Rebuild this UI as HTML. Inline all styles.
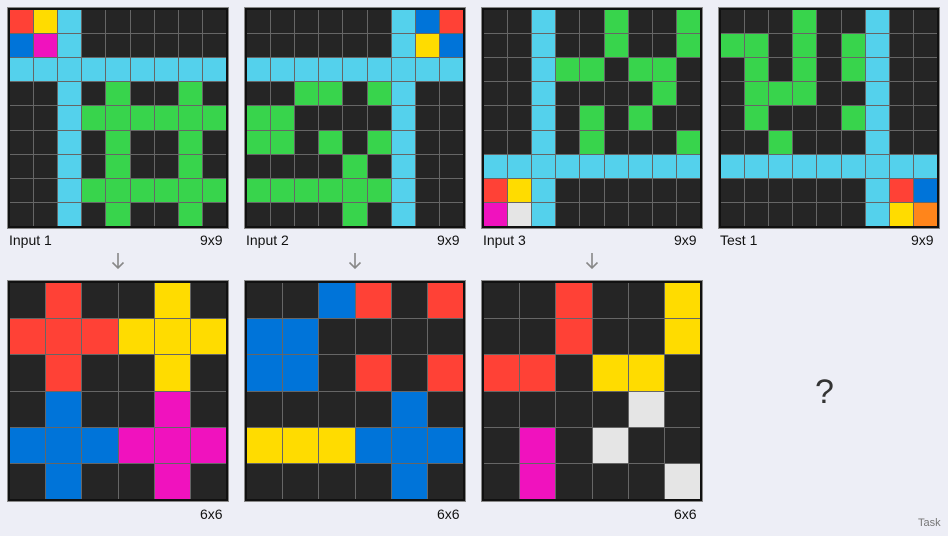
<!DOCTYPE html>
<html><head><meta charset="utf-8"><style>
body{margin:0;width:948px;height:536px;background:#edeef6;font-family:"Liberation Sans",sans-serif;position:relative;overflow:hidden}
.g{position:absolute;width:216px;height:216px;padding:2px;border:1px solid #888;display:grid;gap:1px;box-sizing:content-box;background:#666;outline:2px solid #111;outline-offset:-3px}
.n9{grid-template-columns:repeat(9,1fr);grid-template-rows:repeat(9,1fr)}
.n6{grid-template-columns:repeat(6,1fr);grid-template-rows:repeat(6,1fr)}
i{display:block}
.k{background:#252525}.c{background:#54d1ec}.e{background:#38d44c}.r{background:#ff4136}.y{background:#ffdc00}.b{background:#0074d9}.m{background:#f012be}.w{background:#e5e5e5}.o{background:#ff851b}
.l{position:absolute;font-size:14px;color:#111}
.a{position:absolute;width:14px;height:20px}
</style></head><body>

<div class="g n9" style="left:7px;top:7px">
<i class=r></i><i class=y></i><i class=c></i><i class=k></i><i class=k></i><i class=k></i><i class=k></i><i class=k></i><i class=k></i>
<i class=b></i><i class=m></i><i class=c></i><i class=k></i><i class=k></i><i class=k></i><i class=k></i><i class=k></i><i class=k></i>
<i class=c></i><i class=c></i><i class=c></i><i class=c></i><i class=c></i><i class=c></i><i class=c></i><i class=c></i><i class=c></i>
<i class=k></i><i class=k></i><i class=c></i><i class=k></i><i class=e></i><i class=k></i><i class=k></i><i class=e></i><i class=k></i>
<i class=k></i><i class=k></i><i class=c></i><i class=e></i><i class=e></i><i class=e></i><i class=e></i><i class=e></i><i class=e></i>
<i class=k></i><i class=k></i><i class=c></i><i class=k></i><i class=e></i><i class=k></i><i class=k></i><i class=e></i><i class=k></i>
<i class=k></i><i class=k></i><i class=c></i><i class=k></i><i class=e></i><i class=k></i><i class=k></i><i class=e></i><i class=k></i>
<i class=k></i><i class=k></i><i class=c></i><i class=e></i><i class=e></i><i class=e></i><i class=e></i><i class=e></i><i class=e></i>
<i class=k></i><i class=k></i><i class=c></i><i class=k></i><i class=e></i><i class=k></i><i class=k></i><i class=e></i><i class=k></i>
</div>

<div class="g n9" style="left:244px;top:7px">
<i class=k></i><i class=k></i><i class=k></i><i class=k></i><i class=k></i><i class=k></i><i class=c></i><i class=b></i><i class=r></i>
<i class=k></i><i class=k></i><i class=k></i><i class=k></i><i class=k></i><i class=k></i><i class=c></i><i class=y></i><i class=b></i>
<i class=c></i><i class=c></i><i class=c></i><i class=c></i><i class=c></i><i class=c></i><i class=c></i><i class=c></i><i class=c></i>
<i class=k></i><i class=k></i><i class=e></i><i class=e></i><i class=k></i><i class=e></i><i class=c></i><i class=k></i><i class=k></i>
<i class=e></i><i class=e></i><i class=k></i><i class=k></i><i class=k></i><i class=k></i><i class=c></i><i class=k></i><i class=k></i>
<i class=e></i><i class=e></i><i class=k></i><i class=e></i><i class=k></i><i class=e></i><i class=c></i><i class=k></i><i class=k></i>
<i class=k></i><i class=k></i><i class=k></i><i class=k></i><i class=e></i><i class=k></i><i class=c></i><i class=k></i><i class=k></i>
<i class=e></i><i class=e></i><i class=e></i><i class=e></i><i class=e></i><i class=e></i><i class=c></i><i class=k></i><i class=k></i>
<i class=k></i><i class=k></i><i class=k></i><i class=k></i><i class=e></i><i class=k></i><i class=c></i><i class=k></i><i class=k></i>
</div>

<div class="g n9" style="left:481px;top:7px">
<i class=k></i><i class=k></i><i class=c></i><i class=k></i><i class=k></i><i class=e></i><i class=k></i><i class=k></i><i class=e></i>
<i class=k></i><i class=k></i><i class=c></i><i class=k></i><i class=k></i><i class=e></i><i class=k></i><i class=k></i><i class=e></i>
<i class=k></i><i class=k></i><i class=c></i><i class=e></i><i class=e></i><i class=k></i><i class=e></i><i class=e></i><i class=k></i>
<i class=k></i><i class=k></i><i class=c></i><i class=k></i><i class=k></i><i class=k></i><i class=k></i><i class=e></i><i class=k></i>
<i class=k></i><i class=k></i><i class=c></i><i class=k></i><i class=e></i><i class=k></i><i class=e></i><i class=k></i><i class=k></i>
<i class=k></i><i class=k></i><i class=c></i><i class=k></i><i class=e></i><i class=k></i><i class=k></i><i class=k></i><i class=e></i>
<i class=c></i><i class=c></i><i class=c></i><i class=c></i><i class=c></i><i class=c></i><i class=c></i><i class=c></i><i class=c></i>
<i class=r></i><i class=y></i><i class=c></i><i class=k></i><i class=k></i><i class=k></i><i class=k></i><i class=k></i><i class=k></i>
<i class=m></i><i class=w></i><i class=c></i><i class=k></i><i class=k></i><i class=k></i><i class=k></i><i class=k></i><i class=k></i>
</div>

<div class="g n9" style="left:718px;top:7px">
<i class=k></i><i class=k></i><i class=k></i><i class=e></i><i class=k></i><i class=k></i><i class=c></i><i class=k></i><i class=k></i>
<i class=e></i><i class=e></i><i class=k></i><i class=e></i><i class=k></i><i class=e></i><i class=c></i><i class=k></i><i class=k></i>
<i class=k></i><i class=e></i><i class=k></i><i class=e></i><i class=k></i><i class=e></i><i class=c></i><i class=k></i><i class=k></i>
<i class=k></i><i class=e></i><i class=e></i><i class=e></i><i class=k></i><i class=k></i><i class=c></i><i class=k></i><i class=k></i>
<i class=k></i><i class=e></i><i class=k></i><i class=k></i><i class=k></i><i class=e></i><i class=c></i><i class=k></i><i class=k></i>
<i class=k></i><i class=k></i><i class=e></i><i class=k></i><i class=k></i><i class=k></i><i class=c></i><i class=k></i><i class=k></i>
<i class=c></i><i class=c></i><i class=c></i><i class=c></i><i class=c></i><i class=c></i><i class=c></i><i class=c></i><i class=c></i>
<i class=k></i><i class=k></i><i class=k></i><i class=k></i><i class=k></i><i class=k></i><i class=c></i><i class=r></i><i class=b></i>
<i class=k></i><i class=k></i><i class=k></i><i class=k></i><i class=k></i><i class=k></i><i class=c></i><i class=y></i><i class=o></i>
</div>

<div class="l" style="left:9px;top:232px">Input 1</div><div class="l" style="left:200px;top:232px">9x9</div>
<div class="l" style="left:246px;top:232px">Input 2</div><div class="l" style="left:437px;top:232px">9x9</div>
<div class="l" style="left:483px;top:232px">Input 3</div><div class="l" style="left:674px;top:232px">9x9</div>
<div class="l" style="left:720px;top:232px">Test 1</div><div class="l" style="left:911px;top:232px">9x9</div>

<svg class="a" style="left:111px;top:251px" viewBox="0 0 14 20"><path d="M7 2V17M1.5 11.5L7 17L12.5 11.5" fill="none" stroke="#888" stroke-width="1.6"/></svg>
<svg class="a" style="left:348px;top:251px" viewBox="0 0 14 20"><path d="M7 2V17M1.5 11.5L7 17L12.5 11.5" fill="none" stroke="#888" stroke-width="1.6"/></svg>
<svg class="a" style="left:585px;top:251px" viewBox="0 0 14 20"><path d="M7 2V17M1.5 11.5L7 17L12.5 11.5" fill="none" stroke="#888" stroke-width="1.6"/></svg>

<div class="g n6" style="left:7px;top:280px">
<i class=k></i><i class=r></i><i class=k></i><i class=k></i><i class=y></i><i class=k></i>
<i class=r></i><i class=r></i><i class=r></i><i class=y></i><i class=y></i><i class=y></i>
<i class=k></i><i class=r></i><i class=k></i><i class=k></i><i class=y></i><i class=k></i>
<i class=k></i><i class=b></i><i class=k></i><i class=k></i><i class=m></i><i class=k></i>
<i class=b></i><i class=b></i><i class=b></i><i class=m></i><i class=m></i><i class=m></i>
<i class=k></i><i class=b></i><i class=k></i><i class=k></i><i class=m></i><i class=k></i>
</div>

<div class="g n6" style="left:244px;top:280px">
<i class=k></i><i class=k></i><i class=b></i><i class=r></i><i class=k></i><i class=r></i>
<i class=b></i><i class=b></i><i class=k></i><i class=k></i><i class=k></i><i class=k></i>
<i class=b></i><i class=b></i><i class=k></i><i class=r></i><i class=k></i><i class=r></i>
<i class=k></i><i class=k></i><i class=k></i><i class=k></i><i class=b></i><i class=k></i>
<i class=y></i><i class=y></i><i class=y></i><i class=b></i><i class=b></i><i class=b></i>
<i class=k></i><i class=k></i><i class=k></i><i class=k></i><i class=b></i><i class=k></i>
</div>

<div class="g n6" style="left:481px;top:280px">
<i class=k></i><i class=k></i><i class=r></i><i class=k></i><i class=k></i><i class=y></i>
<i class=k></i><i class=k></i><i class=r></i><i class=k></i><i class=k></i><i class=y></i>
<i class=r></i><i class=r></i><i class=k></i><i class=y></i><i class=y></i><i class=k></i>
<i class=k></i><i class=k></i><i class=k></i><i class=k></i><i class=w></i><i class=k></i>
<i class=k></i><i class=m></i><i class=k></i><i class=w></i><i class=k></i><i class=k></i>
<i class=k></i><i class=m></i><i class=k></i><i class=k></i><i class=k></i><i class=w></i>
</div>

<div class="l" style="left:200px;top:506px">6x6</div>
<div class="l" style="left:437px;top:506px">6x6</div>
<div class="l" style="left:674px;top:506px">6x6</div>

<div style="position:absolute;left:815px;top:373px;font-size:34px;color:#333">?</div>
<div style="position:absolute;left:918px;top:517px;font-size:11px;color:#777">Task</div>
</body></html>
